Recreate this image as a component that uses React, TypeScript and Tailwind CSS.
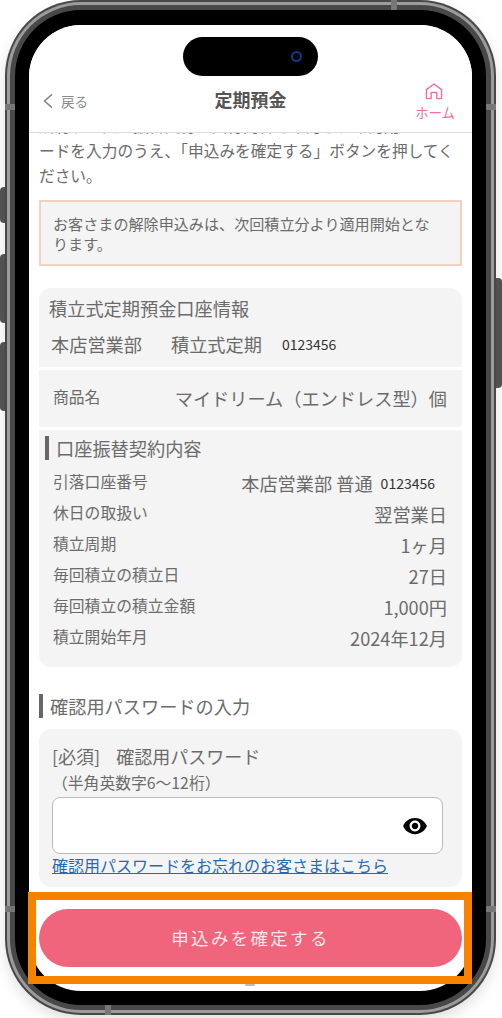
import { MdVisibility } from "react-icons/md";

const font = { fontFamily: '"Noto Sans CJK JP", "Noto Sans", sans-serif' };

const rows = [
  { label: "休日の取扱い", value: "翌営業日" },
  { label: "積立周期", value: "1ヶ月" },
  { label: "毎回積立の積立日", value: "27日" },
  { label: "毎回積立の積立金額", value: "1,000円" },
  { label: "積立開始年月", value: "2024年12月" },
];

const HomeIcon = () => (
  <svg width="18" height="17" viewBox="0 0 19 18" fill="none" stroke="#f0709a" strokeWidth="1.5" strokeLinejoin="round">
    <path d="M1.5 16.5 V7 L9.5 1 L17.5 7 V16.5 H12.5 V10 H6.5 V16.5 Z" />
  </svg>
);

const BackIcon = () => (
  <svg width="10" height="14" viewBox="0 0 10 14" fill="none" stroke="#808080" strokeWidth="1.5">
    <path d="M9 0.5 L1.5 7 L9 13.5" />
  </svg>
);

// row of the contract table
const Row = ({ label, children }: { label: string; children: React.ReactNode }) => (
  <div className="flex h-[31px] items-center justify-between">
    <span className="pb-[3px] text-[15.8px] leading-[28px]">{label}</span>
    {children}
  </div>
);

export default function App() {
  return (
    <div style={font} className="relative h-[1018px] w-[502px] overflow-hidden bg-white text-[#6b6b6b]">
      {/* side buttons */}
      <div className="absolute left-0 top-[187px] h-[36px] w-[7px] rounded-l-sm bg-[#555]" />
      <div className="absolute left-0 top-[254px] h-[69px] w-[7px] rounded-l-sm bg-[#555]" />
      <div className="absolute left-0 top-[342px] h-[69px] w-[7px] rounded-l-sm bg-[#555]" />
      <div className="absolute right-0 top-[278px] h-[110px] w-[8px] rounded-r-sm bg-[#555]" />

      {/* phone frame */}
      <div className="absolute left-[5px] top-0 h-[1015px] w-[491px] rounded-[76px] bg-[#484848] p-[2px] shadow-[0_6px_14px_rgba(0,0,0,0.12)]">
        <div className="h-full w-full rounded-[74px] bg-[#9c9c9c] p-[3px]">
          <div className="h-full w-full rounded-[71px] bg-[#484848] p-[5px]">
            <div className="h-full w-full rounded-[66px] bg-black px-[14px] pb-[14px] pt-[15px]">
              {/* screen */}
              <div className="relative flex h-full w-full flex-col overflow-hidden rounded-[52px] bg-white">
                <header className="relative flex h-[108px] shrink-0 items-end justify-between border-b border-[#dddddd] bg-white pb-[11px] pl-[14px] pr-[17px]">
                  <div className="mb-[10px] flex items-center text-[#8a8a8a]">
                    <BackIcon />
                    <span className="ml-[8px] text-[13.5px] leading-[20px]">戻る</span>
                  </div>
                  <h1 className="absolute left-0 right-0 top-[61px] text-center text-[18px] font-bold leading-[26px] text-[#555]">定期預金</h1>
                  <div className="flex flex-col items-center text-[#f0709a]">
                    <span className="mb-[3px] mr-[2px]">
                      <HomeIcon />
                    </span>
                    <span className="text-[13.4px] leading-[18px]">ホーム</span>
                  </div>
                </header>

                <div className="flex flex-1 flex-col overflow-hidden px-[10px]">
                  <p className="-mt-[20px] pr-[4px] text-[15.7px] leading-[25px]">
                    所有する口座振替実行の実行内容を確認し、確認用パスワードを入力のうえ、「申込みを確定する」ボタンを押してください。
                  </p>

                  <div className="mt-[12px] border-2 border-[#f2d2bc] bg-[#f4f4f4] py-[11px] pl-[12px] pr-[17px] text-[15.1px] leading-[20px]">
                    お客さまの解除申込みは、次回積立分より適用開始となります。
                  </div>

                  <div className="mt-[22px] flex flex-col gap-[3px]">
                    <section className="h-[79px] rounded-t-xl bg-[#f4f4f4] pl-[10px] pt-[6px]">
                      <div className="text-[18.2px] leading-[28px]">積立式定期預金口座情報</div>
                      <div className="mt-[8px] flex items-center pl-[2px] text-[18.2px] leading-[28px]">
                        <span>本店営業部</span>
                        <span className="ml-[29px]">積立式定期</span>
                        <span className="ml-[20px] text-[14px] text-[#333]">0123456</span>
                      </div>
                    </section>

                    <section className="flex h-[57px] items-center justify-between bg-[#f4f4f4] pl-[14px] pr-[15px]">
                      <span className="pb-[3px] text-[15.8px]">商品名</span>
                      <span className="text-[18.2px]">マイドリーム（エンドレス型）個</span>
                    </section>

                    <section className="h-[237px] rounded-b-xl bg-[#f4f4f4] pt-[6px]">
                      <div className="flex h-[24px] items-center pl-[6px]">
                        <span className="h-[24px] w-[4px] bg-[#666]" />
                        <span className="ml-[7px] text-[18.2px] leading-[24px]">口座振替契約内容</span>
                      </div>
                      <div className="mt-[8px] pl-[14px] pr-[15px]">
                        <Row label="引落口座番号">
                          <span className="flex items-center text-[18.2px]">
                            本店営業部 普通
                            <span className="ml-[8px] mr-[12px] text-[14px] text-[#333]">0123456</span>
                          </span>
                        </Row>
                        {rows.map((row) => (
                          <Row key={row.label} label={row.label}>
                            <span className="text-[18.2px]">{row.value}</span>
                          </Row>
                        ))}
                      </div>
                    </section>
                  </div>

                  <div className="mt-[27px] flex h-[24px] items-center">
                    <span className="h-[24px] w-[4px] bg-[#666]" />
                    <h2 className="ml-[7px] text-[18.2px] leading-[24px]">確認用パスワードの入力</h2>
                  </div>

                  <section className="mt-[11px] h-[158px] rounded-xl bg-[#f4f4f4] px-[13px] pt-[13px]">
                    <div className="flex text-[18px] leading-[28px]">
                      <span>[必須]</span>
                      <span className="ml-[16px]">確認用パスワード</span>
                    </div>
                    <div className="text-[15.8px] leading-[26px]">（半角英数字6〜12桁）</div>
                    <div className="mt-[1px] flex h-[57px] w-[391px] items-center justify-end rounded-lg border border-[#bbbbbb] bg-white pr-[14px]">
                      <MdVisibility size={26} color="#000" />
                    </div>
                    <a href="#" className="block text-[16px] leading-[22px] text-[#1f6bb5] underline">
                      確認用パスワードをお忘れのお客さまはこちら
                    </a>
                  </section>

                  <button className="mt-[22px] h-[58px] w-full shrink-0 rounded-full bg-[#f0647c] text-[17.5px] tracking-[2.3px] text-[#fbe6ea]">
                    申込みを確定する
                  </button>
                </div>

                {/* dynamic island */}
                <div className="absolute left-[154px] top-[12px] flex h-[39px] w-[135px] items-center justify-end rounded-full bg-black pr-[16px]">
                  <span className="h-[11px] w-[11px] rounded-full border-2 border-[#0f3a8c]" />
                </div>
                <div className="absolute bottom-[5px] left-[216px] h-[2px] w-[10px] rounded-full bg-[#bbb]" />
              </div>
            </div>
          </div>
        </div>
      </div>

      {/* antenna bands on the frame */}
      <div className="absolute left-[5px] top-[104px] h-[6px] w-[10px] bg-[#777]" />
      <div className="absolute left-[486px] top-[104px] h-[6px] w-[10px] bg-[#777]" />
      <div className="absolute left-[5px] top-[906px] h-[6px] w-[10px] bg-[#777]" />
      <div className="absolute left-[486px] top-[906px] h-[6px] w-[10px] bg-[#777]" />
      <div className="absolute left-[391px] top-0 h-[10px] w-[6px] bg-[#777]" />
      <div className="absolute left-[105px] top-[1005px] h-[10px] w-[6px] bg-[#777]" />

      {/* highlight around the button */}
      <div className="pointer-events-none absolute left-[28px] top-[892px] h-[92px] w-[444px] border-[8px] border-[#f78200]" />
    </div>
  );
}
